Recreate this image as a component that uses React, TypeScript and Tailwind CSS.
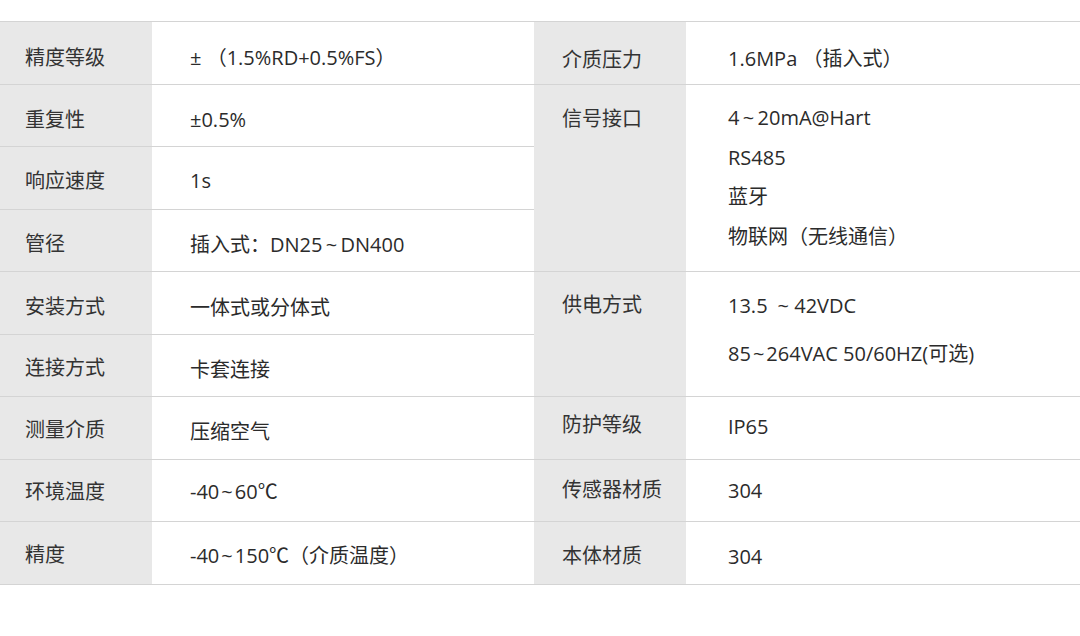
import type { ReactNode } from 'react';

const Label = ({ children, className = '' }: { children: ReactNode; className?: string }) => (
  <div
    className={`flex items-center border-b border-[#d4d4d4] bg-[#e8e8e8] leading-[30px] text-[#333] ${className}`}
  >
    {children}
  </div>
);

const Value = ({ children, className = '' }: { children: ReactNode; className?: string }) => (
  <div className={`flex items-center border-b border-[#d4d4d4] leading-[30px] text-[#2b2b2b] ${className}`}>
    {children}
  </div>
);

export default function App() {
  return (
    <div
      className="min-h-[636px] w-[1080px] bg-white pt-[21px] text-[20px]"
      style={{ fontFamily: '"Open Sans", "Noto Sans CJK SC", sans-serif' }}
    >
      <div className="grid grid-cols-[152px_382px_152px_1fr] grid-rows-[63px_62px_63px_62px_63px_62px_63px_62px_63px] border-t border-[#d4d4d4]">
        {/* row 1 */}
        <Label className="pl-[25px] pt-[10px]">精度等级</Label>
        <Value className="pl-[38px] pt-[10px]">± （1.5%RD+0.5%FS）</Value>
        <Label className="pl-[28px] pt-[13px]">介质压力</Label>
        <Value className="pl-[42px] pt-[11px]">1.6MPa （插入式）</Value>

        {/* row 2 */}
        <Label className="pl-[25px] pt-[8px]">重复性</Label>
        <Value className="pl-[38px] pt-[8px]">±0.5%</Value>
        <Label className="row-span-3 !items-start pl-[28px] pt-[19px]">信号接口</Label>
        <div className="row-span-3 flex flex-col border-b border-[#d4d4d4] pl-[42px] pt-[13px] leading-[39.5px] text-[#2b2b2b]">
          <p>4{'\u2009'}~{'\u2009'}20mA@Hart</p>
          <p>RS485</p>
          <p>蓝牙</p>
          <p>物联网（无线通信）</p>
        </div>

        {/* row 3 */}
        <Label className="pl-[25px] pt-[6px]">响应速度</Label>
        <Value className="pl-[38px] pt-[6px]">1s</Value>

        {/* row 4 */}
        <Label className="pl-[25px] pt-[6px]">管径</Label>
        <Value className="pl-[38px] pt-[8px]">插入式：DN25{'\u2009'}~{'\u2009'}DN400</Value>

        {/* row 5 */}
        <Label className="pl-[25px] pt-[7px]">安装方式</Label>
        <Value className="pl-[38px] pt-[10px]">一体式或分体式</Value>
        <Label className="row-span-2 !items-start pl-[28px] pt-[18px]">供电方式</Label>
        <div className="row-span-2 flex flex-col border-b border-[#d4d4d4] pl-[42px] pt-[10px] leading-[48px] text-[#2b2b2b]">
          <p>13.5{'\u2002'}~ 42VDC</p>
          <p>85{'\u200a'}~{'\u200a'}264VAC 50/60HZ(可选)</p>
        </div>

        {/* row 6 */}
        <Label className="pl-[25px] pt-[5px]">连接方式</Label>
        <Value className="pl-[38px] pt-[8px]">卡套连接</Value>

        {/* row 7 */}
        <Label className="pl-[25px] pt-[3px]">测量介质</Label>
        <Value className="pl-[38px] pt-[7px]">压缩空气</Value>
        <Label className="pl-[28px] pb-[7px]">防护等级</Label>
        <Value className="pl-[42px] pb-[2px]">IP65</Value>

        {/* row 8 */}
        <Label className="pl-[25px] pt-[2px]">环境温度</Label>
        <Value className="pl-[38px] pt-[3px]">-40{'\u200a'}~{'\u200a'}60℃</Value>
        <Label className="pl-[28px] pb-[2px]">传感器材质</Label>
        <Value className="pl-[42px]">304</Value>

        {/* row 9 */}
        <Label className="pl-[25px] pt-[4px]">精度</Label>
        <Value className="pl-[38px] pt-[6px]">-40{'\u200a'}~{'\u200a'}150℃（介质温度）</Value>
        <Label className="pl-[28px] pt-[6px]">本体材质</Label>
        <Value className="pl-[42px] pt-[7px]">304</Value>
      </div>
    </div>
  );
}
